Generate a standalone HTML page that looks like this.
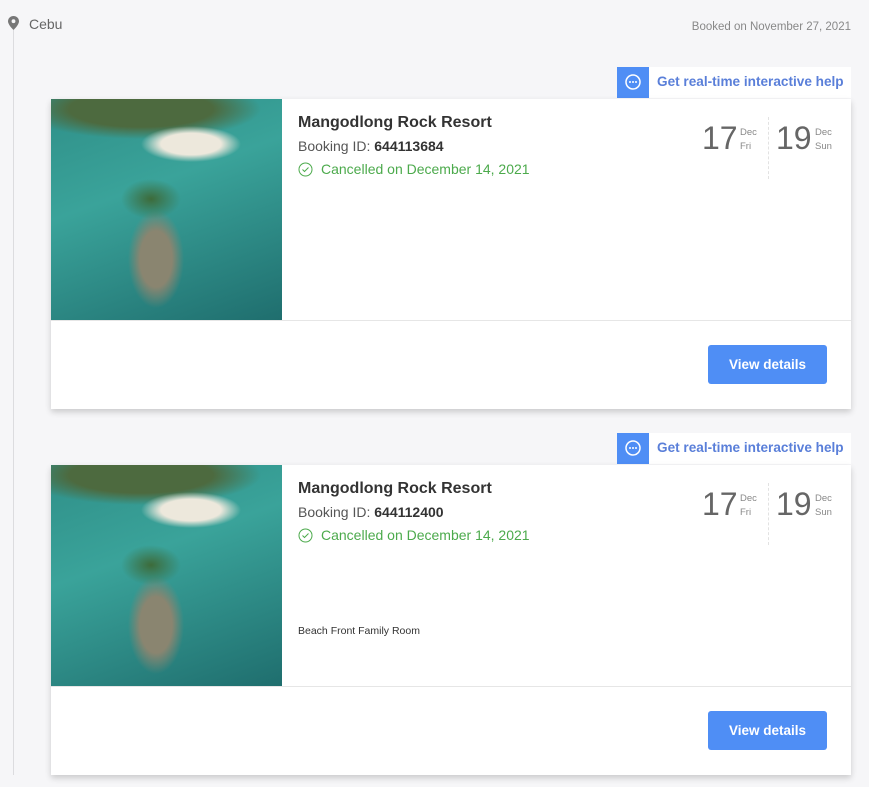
<!DOCTYPE html>
<html><head><style>
body{margin:0;width:869px;height:787px;background:#f6f6f8;font-family:"Liberation Sans",sans-serif;position:relative;overflow:hidden}
.line{position:absolute;left:13px;top:30px;width:1px;height:745px;background:#dcdcdf}
.pin{position:absolute;left:8px;top:16px}
.city{position:absolute;left:29px;top:16px;font-size:14px;color:#666}
.booked{position:absolute;right:18px;top:21px;font-size:11.5px;color:#888}
.help{position:absolute;left:617px;width:234px;height:31px;background:#fff}
.help .ic{position:absolute;left:0;top:0;width:32px;height:31px;background:#4f8ef5}
.help span{position:absolute;left:40px;top:7px;font-size:13.6px;font-weight:bold;color:#5a7fd9}
.card{position:absolute;left:51px;width:800px;height:310px;background:#fff;box-shadow:0 3px 6px rgba(0,0,0,.18)}
.img{position:absolute;left:0;top:0;width:231px;height:221px;background:
radial-gradient(ellipse 30px 20px at 100px 100px,#3d6b3a,transparent),
radial-gradient(ellipse 40px 70px at 105px 160px,#8a8570 40%,transparent 70%),
radial-gradient(ellipse 50px 18px at 140px 45px,#ede8dc 60%,transparent),
radial-gradient(ellipse 120px 30px at 90px 10px,#4d6a3f 60%,transparent),
linear-gradient(160deg,#2f8f88 0%,#3aa39a 40%,#1f6e6e 100%)}
.div{position:absolute;left:0;top:221px;width:800px;height:1px;background:#e6e6e6}
.name{position:absolute;left:247px;top:15px;font-size:16px;font-weight:bold;color:#333}
.bid{position:absolute;left:247px;top:39px;font-size:14px;color:#555}
.bid b{color:#333}
.canc{position:absolute;left:247px;top:62px;font-size:14px;color:#4caa4c}
.canc svg{vertical-align:-3px;margin-right:8px}
.d{position:absolute;top:21px;font-size:32px;color:#666;font-weight:300}
.s{position:absolute;top:27px;font-size:9.5px;color:#888;line-height:14px}
.sep{position:absolute;left:717px;top:18px;height:62px;border-left:1px dashed #e2e2e2}
.btn{position:absolute;left:657px;top:246px;width:119px;height:39px;background:#4f8ef5;border-radius:3px;color:#fff;font-size:13.5px;font-weight:bold;text-align:center;line-height:39px}
.room{position:absolute;left:247px;top:160px;font-size:10.5px;color:#333}
</style></head><body>
<div class="line"></div>
<svg class="pin" width="11" height="14" viewBox="0 0 11 14"><path d="M5.5 0C2.5 0 0 2.3 0 5.3 0 9 5.5 14 5.5 14S11 9 11 5.3C11 2.3 8.5 0 5.5 0z" fill="#777"/><circle cx="5.5" cy="5.2" r="1.9" fill="#f6f6f8"/></svg>
<div class="city">Cebu</div>
<div class="booked">Booked on November 27, 2021</div>

<div class="help" style="top:67px"><div class="ic"><svg width="32" height="31"><circle cx="16" cy="15" r="7" fill="none" stroke="#fff" stroke-width="1.5"/><circle cx="13" cy="15" r="1" fill="#fff"/><circle cx="16" cy="15" r="1" fill="#fff"/><circle cx="19" cy="15" r="1" fill="#fff"/></svg></div><span>Get real-time interactive help</span></div>
<div class="card" style="top:99px">
<div class="img"></div><div class="div"></div>
<div class="name">Mangodlong Rock Resort</div>
<div class="bid">Booking ID: <b>644113684</b></div>
<div class="canc"><svg width="15" height="15"><circle cx="7.5" cy="7.5" r="6.5" fill="none" stroke="#4caa4c"/><path d="M4.5 7.5l2 2 4-4" fill="none" stroke="#4caa4c"/></svg>Cancelled on December 14, 2021</div>
<div class="d" style="left:651px">17</div><div class="s" style="left:689px">Dec<br>Fri</div>
<div class="sep"></div>
<div class="d" style="left:725px">19</div><div class="s" style="left:764px">Dec<br>Sun</div>
<div class="btn">View details</div>
</div>

<div class="help" style="top:433px"><div class="ic"><svg width="32" height="31"><circle cx="16" cy="15" r="7" fill="none" stroke="#fff" stroke-width="1.5"/><circle cx="13" cy="15" r="1" fill="#fff"/><circle cx="16" cy="15" r="1" fill="#fff"/><circle cx="19" cy="15" r="1" fill="#fff"/></svg></div><span>Get real-time interactive help</span></div>
<div class="card" style="top:465px">
<div class="img"></div><div class="div"></div>
<div class="name">Mangodlong Rock Resort</div>
<div class="bid">Booking ID: <b>644112400</b></div>
<div class="canc"><svg width="15" height="15"><circle cx="7.5" cy="7.5" r="6.5" fill="none" stroke="#4caa4c"/><path d="M4.5 7.5l2 2 4-4" fill="none" stroke="#4caa4c"/></svg>Cancelled on December 14, 2021</div>
<div class="d" style="left:651px">17</div><div class="s" style="left:689px">Dec<br>Fri</div>
<div class="sep"></div>
<div class="d" style="left:725px">19</div><div class="s" style="left:764px">Dec<br>Sun</div>
<div class="room">Beach Front Family Room</div>
<div class="btn">View details</div>
</div>
</body></html>
